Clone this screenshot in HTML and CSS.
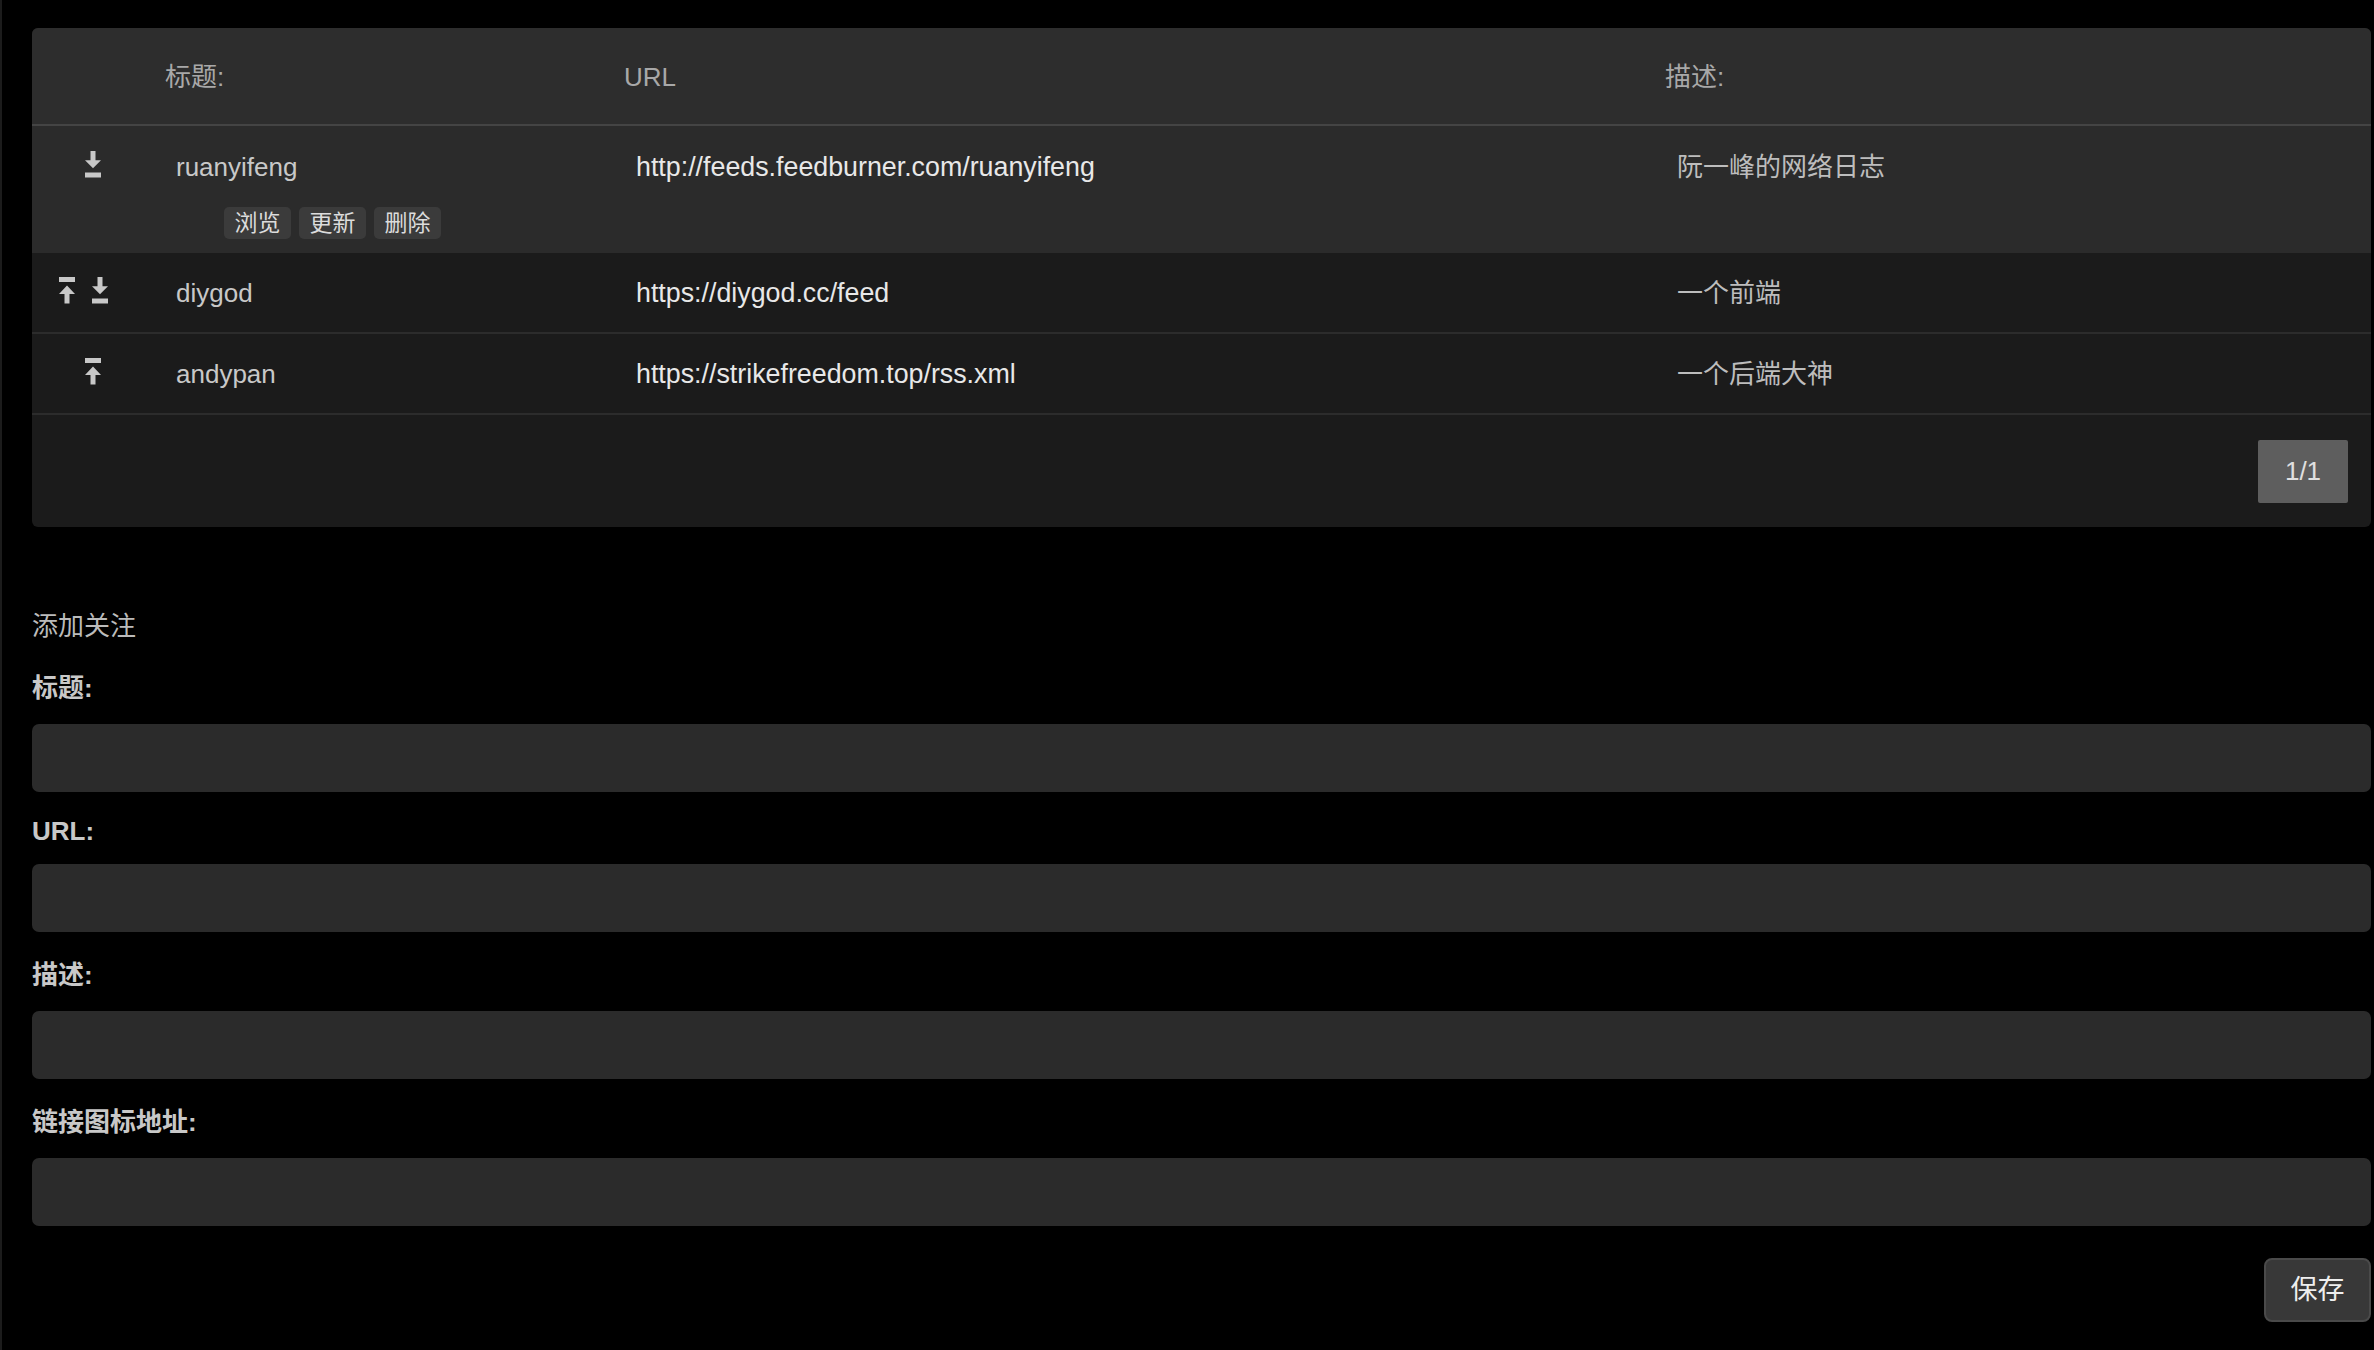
FILE: index.html
```html
<!DOCTYPE html>
<html lang="zh-CN">
<head>
<meta charset="utf-8">
<title>关注列表</title>
<link rel="stylesheet" href="styles.css">
</head>
<body>
<div class="page">
  <section class="card">
    <div class="row head">
      <div class="cell"></div>
      <div class="cell">标题:</div>
      <div class="cell">URL</div>
      <div class="cell">描述:</div>
    </div>

    <div class="row row-open">
      <div class="cell icons icons-open">
        <svg class="ico" viewBox="0 0 16 27" width="16" height="27"><path d="M5.5 0h5v9.3H16l-8 8L0 9.3h5.5z"/><rect y="21.5" width="16" height="5"/></svg>
      </div>
      <div class="cell name">
        <div>ruanyifeng</div>
        <div class="actions">
          <span class="act">浏览</span>
          <span class="act">更新</span>
          <span class="act">删除</span>
        </div>
      </div>
      <div class="cell url">http://feeds.feedburner.com/ruanyifeng</div>
      <div class="cell desc">阮一峰的网络日志</div>
    </div>

    <div class="row line">
      <div class="cell icons">
        <span class="pair">
          <svg class="ico" viewBox="0 0 16 27" width="16" height="27"><rect width="16" height="5"/><path d="M8 8.5l8 8.5h-5.5v9.5h-5V17H0z"/></svg>
          <svg class="ico" viewBox="0 0 16 27" width="16" height="27"><path d="M5.5 0h5v9.3H16l-8 8L0 9.3h5.5z"/><rect y="21.5" width="16" height="5"/></svg>
        </span>
      </div>
      <div class="cell name">diygod</div>
      <div class="cell url">https://diygod.cc/feed</div>
      <div class="cell desc">一个前端</div>
    </div>

    <div class="row line">
      <div class="cell icons">
        <svg class="ico" viewBox="0 0 16 27" width="16" height="27"><rect width="16" height="5"/><path d="M8 8.5l8 8.5h-5.5v9.5h-5V17H0z"/></svg>
      </div>
      <div class="cell name">andypan</div>
      <div class="cell url">https://strikefreedom.top/rss.xml</div>
      <div class="cell desc">一个后端大神</div>
    </div>

    <div class="foot">
      <span class="pager">1/1</span>
    </div>
  </section>

  <form class="form">
    <div class="form-title">添加关注</div>
    <label class="label label-first">标题:</label>
    <div class="input"></div>
    <label class="label label-tight">URL:</label>
    <div class="input"></div>
    <label class="label">描述:</label>
    <div class="input"></div>
    <label class="label">链接图标地址:</label>
    <div class="input"></div>
    <div class="form-actions">
      <span class="save">保存</span>
    </div>
  </form>
</div>
</body>
</html>
```

FILE: styles.css
```css
* { box-sizing: border-box; }

html, body {
  margin: 0;
  background: #000;
}

body {
  font-family: "Liberation Sans", "Noto Sans CJK SC", sans-serif;
  font-size: 26px;
  line-height: 30px;
  color: #c8c8c8;
}

.page {
  min-height: 1350px;
  border-left: 2px solid #1c1c1c;
  padding: 28px 3px 0 30px;
}

.card {
  background: #1b1b1b;
  border-radius: 6px;
  overflow: hidden;
}

.row {
  display: grid;
  grid-template-columns: 121px 459px 1041px 1fr;
}

.head {
  height: 98px;
  align-items: center;
  background: #2d2d2d;
  border-bottom: 2px solid #444;
  color: #a8a8a8;
  padding-top: 2px;
}

.head .cell { padding-left: 12px; }

.row-open {
  background: #2b2b2b;
  align-items: start;
  padding: 26px 0 14px;
}

.line {
  height: 81px;
  align-items: center;
  border-bottom: 2px solid #2c2c2c;
}

.cell { padding-left: 24px; white-space: nowrap; }

.row .name { padding-left: 23px; }

.icons {
  padding-left: 0;
  display: flex;
  justify-content: center;
  align-items: center;
  margin-bottom: 5px;
}

.icons-open {
  margin-top: -3px;
  height: 30px;
  margin-bottom: 0;
}

.pair {
  display: flex;
  gap: 17px;
  margin-right: 18px;
}

.ico { display: block; fill: #c8c8c8; }

.name { color: #c8c8c8; }
.url { color: #e8e8e8; font-size: 26.8px; }
.desc { color: #bdbdbd; }

.actions {
  display: flex;
  gap: 8px;
  margin: 25px 0 0 48px;
}

.act {
  display: inline-flex;
  align-items: center;
  justify-content: center;
  height: 32px;
  padding: 0 10.5px;
  background: #3b3b3b;
  border-radius: 5px;
  font-size: 23px;
  color: #dcdcdc;
}

.foot {
  height: 112px;
  display: flex;
  justify-content: flex-end;
  align-items: center;
  padding-right: 23px;
}

.pager {
  display: flex;
  align-items: center;
  justify-content: center;
  width: 90px;
  height: 63px;
  background: #5e5e5e;
  border-radius: 2px;
  color: #e0e0e0;
}

.form { display: flex; flex-direction: column; }

.form-title {
  margin: 84px 0 6px;
  color: #bbb;
}

.label {
  display: block;
  margin: 28px 0 21px;
  font-weight: bold;
  color: #c8c8c8;
}

.label-first { margin-top: 26px; }
.label-tight { margin-top: 24px; margin-bottom: 18px; }

.input {
  height: 68px;
  background: #2b2b2b;
  border-radius: 7px;
}

.form-actions {
  display: flex;
  justify-content: flex-end;
  margin-top: 32px;
}

.save {
  display: flex;
  align-items: center;
  justify-content: center;
  width: 107px;
  height: 64px;
  background: #383838;
  border: 2px solid #4a4a4a;
  border-radius: 8px;
  font-size: 27px;
  color: #eee;
}
```
